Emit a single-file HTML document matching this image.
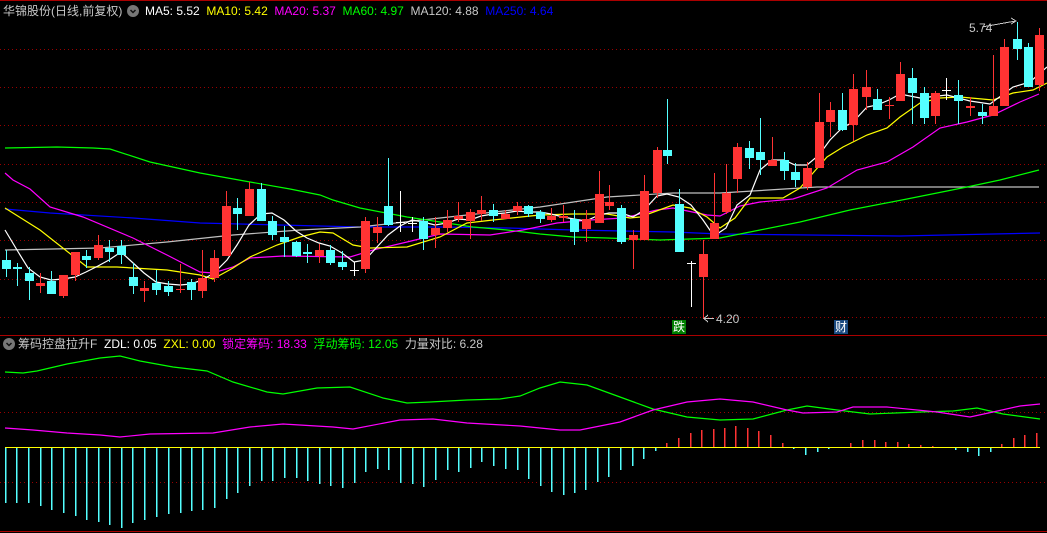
<!DOCTYPE html>
<html><head><meta charset="utf-8"><style>
html,body{margin:0;padding:0;background:#000;width:1047px;height:533px;overflow:hidden}
#c{position:absolute;left:0;top:0}
.t{position:absolute;font-family:"Liberation Sans","Noto Sans CJK SC",sans-serif;font-size:12px;white-space:nowrap;line-height:14px}
</style></head><body>
<svg id="c" width="1047" height="533" xmlns="http://www.w3.org/2000/svg" shape-rendering="crispEdges"></svg>
<div class="t" style="left:3px;top:4px;color:#c8c8c8">华锦股份(日线,前复权)</div>
<div style="position:absolute;left:127px;top:5px;width:12px;height:12px;border-radius:6px;background:#777"></div>
<svg style="position:absolute;left:127px;top:5px" width="12" height="12"><path d="M3.5 5 L6 7.5 L8.5 5" stroke="#111" stroke-width="1.5" fill="none"/></svg>
<div class="t" style="left:145px;top:4px"><span style="color:#fff">MA5: 5.52</span>&nbsp; <span style="color:#ff0">MA10: 5.42</span>&nbsp; <span style="color:#f0f">MA20: 5.37</span>&nbsp; <span style="color:#0f0">MA60: 4.97</span>&nbsp; <span style="color:#c8c8c8">MA120: 4.88</span>&nbsp; <span style="color:#00f">MA250: 4.64</span></div>
<div style="position:absolute;left:3px;top:338px;width:12px;height:12px;border-radius:6px;background:#777"></div>
<svg style="position:absolute;left:3px;top:338px" width="12" height="12"><path d="M3.5 5 L6 7.5 L8.5 5" stroke="#111" stroke-width="1.5" fill="none"/></svg>
<div class="t" style="left:18px;top:337px"><span style="color:#c8c8c8">筹码控盘拉升F</span>&nbsp; <span style="color:#fff">ZDL: 0.05</span>&nbsp; <span style="color:#ff0">ZXL: 0.00</span>&nbsp; <span style="color:#f0f">锁定筹码: 18.33</span>&nbsp; <span style="color:#0f0">浮动筹码: 12.05</span>&nbsp; <span style="color:#c8c8c8">力量对比: 6.28</span></div>
<div class="t" style="left:969px;top:21px;color:#c8c8c8">5.74</div>
<div class="t" style="left:716px;top:312px;color:#c8c8c8">4.20</div>
<div class="t" style="left:672px;top:320px;width:14px;height:14px;background:#008000;color:#fff;font-size:12px;text-align:center">跌</div>
<div class="t" style="left:834px;top:320px;width:14px;height:14px;background:#1a4a80;color:#fff;font-size:12px;text-align:center">财</div>
<script>
var s=document.getElementById('c'),h='';
function L(x1,y1,x2,y2,c,d){h+='<line x1="'+x1+'" y1="'+y1+'" x2="'+x2+'" y2="'+y2+'" stroke="'+c+'" stroke-width="1"'+(d?' stroke-dasharray="1,3"':'')+'/>';}
function P(pts,c){h+='<polyline fill="none" stroke="'+c+'" stroke-width="1.2" shape-rendering="auto" points="'+pts.map(function(p){return p.join(',')}).join(' ')+'"/>';}
L(0,0.5,1047,0.5,'#a00');
[49,87,125,164,202,240,279,317].forEach(function(y){L(0,y+.5,1047,y+.5,'#900',1)});
L(0,335.5,1047,335.5,'#a00');
[377,412,482].forEach(function(y){L(0,y+.5,1047,y+.5,'#900',1)});
L(0,531.5,1047,531.5,'#a00');
// MA lines
P([[5,209],[50,213],[133,218],[200,223],[360,227],[440,227],[507,228],[573,230],[673,232],[720,234],[900,236],[1040,233]],'#0000ff');
P([[5,250],[100,248],[167,242],[233,235],[300,230],[360,227],[440,218],[540,207],[607,197],[673,193],[720,193],[817,187],[1039,187]],'#c0c0c0');
P([[5,148],[57,147],[93,148],[110,149],[150,162],[200,173],[250,182],[290,189],[320,195],[333,200],[360,208],[407,217],[473,227],[507,230],[540,234],[573,237],[607,238],[660,240],[720,238],[760,230],[800,222],[850,210],[907,199],[967,187],[1000,180],[1039,170]],'#00ff00');
P([[5,173],[13,180],[30,189],[50,207],[83,217],[133,238],[167,255],[200,272],[213,273],[233,267],[250,258],[283,256],[350,257],[373,250],[407,242],[440,234],[490,235],[523,230],[557,223],[590,220],[623,218],[657,210],[673,208],[707,215],[720,216],[740,206],[760,202],[793,199],[827,188],[857,170],[887,162],[913,147],[940,128],[967,122],[993,115],[1020,102],[1039,94]],'#ff00ff');
P([[5,208],[40,230],[87,267],[117,267],[167,270],[200,275],[213,279],[233,268],[250,257],[277,245],[300,237],[320,232],[333,233],[353,245],[370,248],[407,247],[440,237],[467,223],[493,220],[540,215],[573,214],[607,214],[630,218],[640,217],[673,205],[690,208],[707,217],[720,228],[735,218],[750,198],[783,198],[800,188],[813,173],[827,157],[843,147],[867,135],[887,128],[900,117],[920,103],[940,98],[960,97],[993,100],[1013,93],[1033,90],[1047,83]],'#ffff00');
P([[5,230],[17,250],[28,268],[40,277],[51,280],[63,279],[75,277],[86,272],[98,266],[109,260],[121,252],[132,262],[144,273],[156,282],[168,284],[180,285],[191,284],[202,280],[214,273],[227,260],[237,245],[249,225],[261,214],[272,213],[284,220],[296,231],[307,238],[319,243],[330,246],[342,253],[354,262],[365,260],[377,247],[388,235],[400,226],[412,220],[423,222],[435,225],[447,223],[458,219],[470,220],[481,216],[493,214],[505,213],[517,211],[528,212],[540,212],[551,214],[563,217],[574,219],[586,221],[599,215],[609,213],[621,213],[633,217],[644,210],[657,196],[667,194],[679,197],[691,205],[703,220],[714,236],[726,228],[737,205],[750,195],[760,170],[772,160],[784,160],[795,165],[807,165],[819,155],[830,140],[842,128],[853,122],[867,107],[877,105],[889,100],[900,94],[920,98],[947,95],[970,101],[990,104],[1013,87],[1030,82],[1047,67]],'#ffffff');
// candles [x,bt,bb,wt,wb,c]
var C=[[6,260,269,250,277,'c'],[17,267,269,263,286,'c'],[29,273,281,267,300,'c'],[40,283,286,273,293,'r'],[51,281,294,271,294,'c'],[63,275,296,275,298,'r'],[75,252,275,252,281,'r'],[86,256,260,250,268,'c'],[98,245,258,235,260,'r'],[109,248,252,240,262,'c'],[121,246,255,240,264,'c'],[133,277,286,263,294,'c'],[144,288,291,281,302,'r'],[156,283,290,270,295,'c'],[168,286,292,281,296,'c'],[180,289,290,264,293,'r'],[191,282,290,279,300,'c'],[202,278,291,250,298,'r'],[214,258,278,250,282,'r'],[226,206,256,191,256,'r'],[237,208,214,198,230,'c'],[249,189,216,182,216,'r'],[261,189,221,183,221,'c'],[272,221,235,216,240,'c'],[284,237,242,226,257,'c'],[296,242,256,241,257,'c'],[307,252,254,244,263,'c'],[319,250,256,244,263,'r'],[330,250,263,245,265,'c'],[342,262,267,251,270,'c'],[354,270,270,262,276,'w'],[365,221,269,217,273,'r'],[377,227,233,217,243,'r'],[388,206,225,158,226,'c'],[400,222,222,191,232,'w'],[412,223,223,217,232,'w'],[423,221,239,217,250,'c'],[435,228,235,217,248,'r'],[447,220,228,210,232,'r'],[458,216,219,202,222,'r'],[470,212,221,209,239,'r'],[481,210,214,196,221,'r'],[493,210,216,204,222,'c'],[505,214,219,210,219,'r'],[517,206,211,202,215,'r'],[528,206,214,205,217,'c'],[540,212,219,210,223,'c'],[551,216,220,208,222,'r'],[563,216,218,205,222,'r'],[574,219,232,210,245,'c'],[586,219,229,210,242,'r'],[599,194,223,171,223,'r'],[609,202,206,185,210,'r'],[621,208,242,205,244,'c'],[633,235,240,230,269,'r'],[644,191,240,175,240,'r'],[657,150,193,147,198,'r'],[667,150,156,99,164,'c'],[679,204,252,189,252,'c'],[691,263,263,261,307,'w'],[703,254,277,240,319,'r'],[714,223,239,173,239,'r'],[726,193,212,164,214,'r'],[737,147,179,143,193,'r'],[749,148,158,141,169,'c'],[760,152,160,118,175,'c'],[772,160,166,137,166,'r'],[784,160,171,152,180,'c'],[795,172,180,163,187,'c'],[807,168,187,162,190,'r'],[819,122,168,93,168,'r'],[830,110,122,102,137,'r'],[842,110,130,93,131,'c'],[853,89,125,74,141,'r'],[866,87,97,70,110,'r'],[877,99,110,89,110,'c'],[889,105,106,97,119,'r'],[900,74,101,62,101,'r'],[912,78,93,68,124,'c'],[924,93,118,87,124,'c'],[935,93,116,91,124,'r'],[946,90,90,78,100,'w'],[958,95,101,80,124,'c'],[970,106,108,97,116,'r'],[982,112,116,104,124,'c'],[993,106,116,55,116,'r'],[1004,47,106,39,106,'r'],[1017,39,49,22,60,'c'],[1028,47,87,43,87,'c'],[1039,35,85,28,91,'r']];
var col={r:'#ff3333',c:'#54ffff',w:'#ffffff'};
C.forEach(function(k){var x=k[0],c=col[k[5]];
h+='<rect x="'+x+'" y="'+k[3]+'" width="1" height="'+(k[4]-k[3])+'" fill="'+c+'"/>';
var bh=Math.max(1,k[2]-k[1]);
h+='<rect x="'+(x-4)+'" y="'+k[1]+'" width="9" height="'+bh+'" fill="'+c+'"/>';});
// arrows
L(982,27,1010,22,'#c8c8c8');L(1010,22,1016,21,'#c8c8c8');h+='<path d="M1011 18 L1016 21 L1011 24" stroke="#c8c8c8" fill="none"/>';
h+='<path d="M704 318.5 L714 318.5 M708 315 L704 318.5 L708 322" stroke="#c8c8c8" fill="none"/>';
// bottom panel
P([[5,372],[23,373],[37,371],[67,364],[100,358],[120,356],[140,361],[173,367],[207,371],[233,382],[267,392],[283,394],[317,388],[350,387],[383,398],[407,403],[430,402],[467,400],[500,399],[520,396],[540,388],[560,382],[587,385],[620,397],[653,409],[687,417],[720,420],[753,419],[787,410],[807,406],[837,410],[870,414],[920,412],[953,411],[977,408],[1003,414],[1040,419]],'#00ff00');
P([[5,428],[33,430],[67,433],[100,435],[120,437],[150,434],[213,433],[250,427],[283,424],[333,427],[353,429],[400,420],[433,419],[467,423],[520,426],[560,430],[580,430],[620,422],[653,410],[687,402],[720,399],[753,402],[787,410],[803,413],[837,412],[853,407],[887,407],[937,412],[970,417],[993,412],[1020,406],[1040,404]],'#ff00ff');
var B=[[5,503],[16,503],[28,503],[40,506],[51,510],[63,513],[75,516],[86,520],[98,522],[109,525],[121,528],[132,523],[144,520],[156,517],[168,514],[180,513],[191,511],[202,510],[214,508],[226,499],[237,493],[249,486],[261,481],[272,481],[284,478],[296,478],[307,481],[319,484],[330,486],[342,488],[354,483],[365,472],[377,469],[388,470],[400,483],[412,484],[423,487],[435,480],[447,470],[458,472],[470,468],[481,462],[493,466],[505,469],[517,470],[528,479],[540,486],[551,492],[563,495],[574,493],[585,490],[597,482],[608,477],[620,470],[632,466],[643,459],[655,451],[666,443],[678,438],[690,433],[701,430],[713,429],[724,428],[735,426],[747,428],[758,431],[770,435],[782,443],[793,449],[805,455],[817,452],[828,449],[850,443],[862,440],[874,440],[885,442],[897,442],[908,444],[920,445],[932,446],[955,450],[967,452],[978,456],[990,452],[1001,444],[1013,438],[1024,435],[1036,433]];
B.forEach(function(b){var y=b[1];if(y>447)h+='<rect x="'+b[0]+'" y="447" width="1.5" height="'+(y-447)+'" fill="#54ffff"/>';else h+='<rect x="'+b[0]+'" y="'+y+'" width="1.5" height="'+(447-y)+'" fill="#ff3333"/>';});
L(5,447.5,1040,447.5,'#ffff00');
s.innerHTML=h;
</script>
</body></html>
